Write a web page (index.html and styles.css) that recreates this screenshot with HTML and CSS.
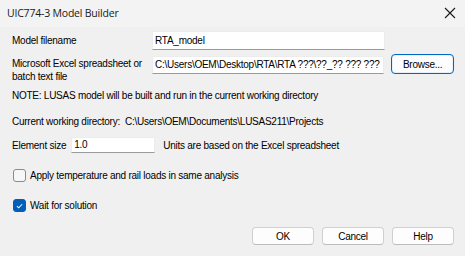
FILE: index.html
```html
<!DOCTYPE html>
<html lang="en">
<head>
    <meta charset="UTF-8">
    <title>UIC774-3 Model Builder</title>
    <link rel="stylesheet" href="styles.css">
</head>
<body>
    <div class="dialog">
        <div class="titlebar">
            <span class="title">UIC774-3 Model Builder</span>
            <svg class="close" width="12" height="12" viewBox="0 0 12 12">
                <path d="M1 1 L11 11 M11 1 L1 11" stroke="#1a1a1a" stroke-width="1.1" fill="none"/>
            </svg>
        </div>

        <div class="content">
            <div class="row row-name">
                <label class="label">Model filename</label>
                <div class="field field-wide">RTA_model</div>
            </div>

            <div class="row row-source">
                <label class="label two-line">Microsoft Excel spreadsheet or<br>batch text file</label>
                <div class="field field-wide field-source">C:\Users\OEM\Desktop\RTA\RTA ???\??_?? ??? ???</div>
                <button class="btn btn-default">Browse...</button>
            </div>

            <p class="note">NOTE: LUSAS model will be built and run in the current working directory</p>

            <p class="cwd">Current working directory:<span class="cwd-path">C:\Users\OEM\Documents\LUSAS211\Projects</span></p>

            <div class="row row-size">
                <label class="label">Element size</label>
                <div class="field field-small">1.0</div>
                <span class="hint">Units are based on the Excel spreadsheet</span>
            </div>

            <div class="check check-apply">
                <span class="box"></span>
                <span>Apply temperature and rail loads in same analysis</span>
            </div>

            <div class="check check-wait">
                <span class="box checked">
                    <svg width="12" height="12" viewBox="0 0 12 12">
                        <path d="M3.2 6.2 L5.1 8 L8.9 4.1" stroke="#fff" stroke-width="1.1" fill="none"/>
                    </svg>
                </span>
                <span>Wait for solution</span>
            </div>

            <div class="actions">
                <button class="btn">OK</button>
                <button class="btn">Cancel</button>
                <button class="btn">Help</button>
            </div>
        </div>
    </div>
</body>
</html>
```

FILE: styles.css
```css
body {
    margin: 0;
    padding: 0;
    background: #f0f0f0;
    font-family: 'Liberation Sans', Arial, sans-serif;
    font-size: 10px;
    letter-spacing: -0.25px;
    color: #000;
}

.dialog {
    width: 465px;
    height: 256px;
    background: #f0f0f0;
    overflow: hidden;
}

.titlebar {
    height: 27px;
    background: #f3f3f3;
    display: flex;
    align-items: center;
    justify-content: space-between;
    padding: 0 7px 0 7px;
    box-sizing: border-box;
}

.title {
    font-family: 'Open Sans', 'Noto Sans', sans-serif;
    font-size: 10.5px;
    letter-spacing: -0.2px;
    color: #1a1a1a;
    padding-bottom: 2px;
}

.close {
    margin-right: 2px;
    margin-bottom: 2px;
}

.content {
    padding: 0 11px 0 12px;
}

.row {
    display: flex;
    align-items: center;
}

.label {
    width: 140px;
    line-height: 13px;
    flex-shrink: 0;
    white-space: nowrap;
}

.field {
    background: #fff;
    border: 1px solid #ececec;
    border-bottom-color: #9a9a9a;
    box-sizing: border-box;
    padding: 0 2px;
    white-space: nowrap;
    overflow: hidden;
}

.field-wide {
    width: 233px;
    height: 19px;
    line-height: 17px;
}

.row-name {
    margin-top: 4px;
}

.row-source {
    margin-top: 4px;
    align-items: flex-start;
}

.row-source .label {
    padding-top: 3px;
}

.field-source {
    margin-top: 2px;
    height: 18px;
    line-height: 16px;
}

.btn {
    width: 62px;
    height: 18px;
    padding: 0;
    background: #fdfdfd;
    border: 1px solid #d0d0d0;
    border-bottom-color: #bcbcbc;
    border-radius: 4px;
    font-family: 'Liberation Sans', Arial, sans-serif;
    font-size: 10px;
    letter-spacing: -0.25px;
    color: #000;
}

.btn-default {
    margin-left: 7px;
    width: 63px;
    height: 20px;
    border: 1px solid #0067c0;
    box-shadow: inset 0 0 0 1px #e6f0fa;
}

.note {
    margin: 6px 0 0;
    line-height: 13px;
}

.cwd {
    margin: 13px 0 0;
    line-height: 13px;
}

.cwd-path {
    margin-left: 5px;
}

.row-size {
    margin-top: 9px;
}

.row-size .label {
    width: auto;
    margin-right: 5px;
}

.field-small {
    width: 84px;
    height: 16px;
    line-height: 14px;
}

.hint {
    margin-left: 8px;
}

.check {
    display: flex;
    align-items: center;
    line-height: 13px;
}

.box {
    width: 11px;
    height: 11px;
    border: 1px solid #8a8a8a;
    border-radius: 3px;
    background: #f7f7f7;
    margin: 0 4px 0 1px;
    display: flex;
    align-items: center;
    justify-content: center;
    flex-shrink: 0;
}

.box.checked {
    background: #005fb8;
    border-color: #005fb8;
}

.check-apply {
    margin-top: 16px;
}

.check-wait {
    margin-top: 17px;
}

.actions {
    display: flex;
    justify-content: flex-end;
    gap: 8px;
    margin-top: 15px;
}
```
